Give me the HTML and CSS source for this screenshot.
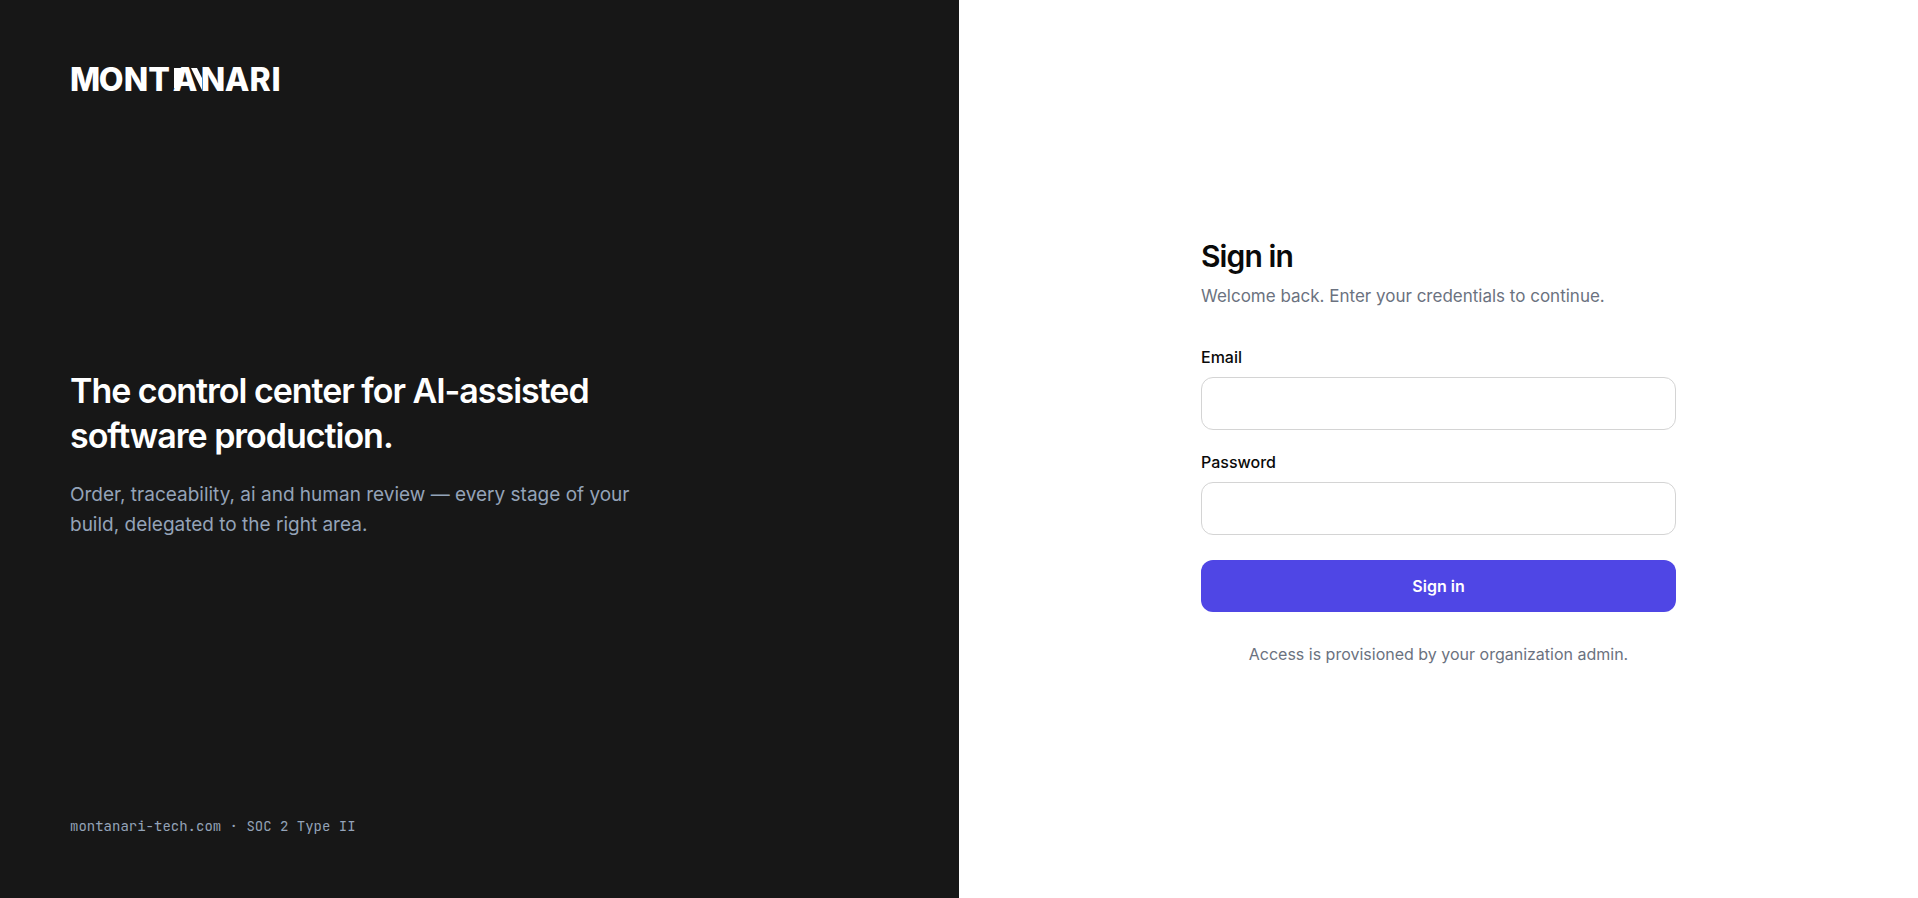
FILE: index.html
```html
<!DOCTYPE html>
<html lang="en">

<head>
    <meta charset="UTF-8">
    <meta name="viewport" content="width=device-width, initial-scale=1.0">
    <title>Sign in - Montanari</title>
    <link rel="stylesheet" href="styles.css">
</head>

<body>
    <div class="layout">
        <!-- Brand panel -->
        <aside class="brand">
            <svg class="logo" viewBox="0 0 208 24" role="img" aria-label="Montanari">
                <text class="logo-text" y="23" x="13 39 64 87 113 141 165 188 204">MONTANARI</text>
                <!-- accents on both sides of the middle A -->
                <path class="logo-accent" d="M102 0h12l-9 20h-3z" />
                <path class="logo-accent" d="M119 0h6l5 10v12z" />
            </svg>

            <div class="pitch">
                <h1>The control center for AI-assisted software production.</h1>
                <p>Order, traceability, ai and human review — every stage of your build, delegated to the right area.</p>
            </div>

            <p class="legal">montanari-tech.com · SOC 2 Type II</p>
        </aside>

        <!-- Sign in form -->
        <main class="panel">
            <form class="signin">
                <h2>Sign in</h2>
                <p class="intro">Welcome back. Enter your credentials to continue.</p>

                <label for="email">Email</label>
                <input type="email" id="email" autocomplete="email">

                <label for="password">Password</label>
                <input type="password" id="password" autocomplete="current-password">

                <button type="submit">Sign in</button>
                <p class="note">Access is provisioned by your organization admin.</p>
            </form>
        </main>
    </div>
</body>

</html>
```
FILE: styles.css
```css
* {
    box-sizing: border-box;
}

body {
    margin: 0;
    font-family: Inter, "Liberation Sans", sans-serif;
    background-color: #fff;
    color: #0a0a0a;
}

h1,
h2,
p {
    margin: 0;
}

.layout {
    display: grid;
    grid-template-columns: 1fr 1fr;
    min-height: 100vh;
}

.brand {
    display: flex;
    flex-direction: column;
    justify-content: space-between;
    padding: 60px 70px;
    background-color: #171717;
    color: #fff;
}

.logo {
    width: 208px;
    height: 24px;
    margin: 8px 2px 2px;
    overflow: visible;
}

.logo-text {
    font-family: Inter, sans-serif;
    font-size: 32px;
    font-weight: 800;
    text-anchor: middle;
    fill: #fff;
}

.logo-accent {
    fill: #fff;
}

.pitch {
    max-width: 580px;
}

.pitch h1 {
    font-size: 34px;
    font-weight: 600;
    line-height: 45px;
    letter-spacing: -0.03em;
}

.pitch p {
    margin-top: 22px;
    font-size: 19px;
    line-height: 30px;
    color: #94a3b8;
}

.legal {
    font-family: "JetBrains Mono", "Liberation Mono", monospace;
    font-size: 14px;
    line-height: 24px;
    color: #94a3b8;
}

.panel {
    display: flex;
    justify-content: center;
    align-items: center;
    padding: 44px 40px 40px;
}

.signin {
    display: flex;
    flex-direction: column;
    width: 100%;
    max-width: 475px;
}

.signin h2 {
    font-size: 30px;
    font-weight: 600;
    line-height: 40px;
    letter-spacing: -0.03em;
}

.intro {
    margin: 8px 0 37px;
    font-size: 17px;
    line-height: 24px;
    color: #6b7280;
}

.signin label {
    margin-bottom: 8px;
    font-size: 16px;
    font-weight: 500;
    line-height: 24px;
}

.signin input {
    height: 53px;
    margin-bottom: 20px;
    padding: 0 16px;
    border: 1px solid #d4d4d4;
    border-radius: 12px;
    font: inherit;
}

.signin button {
    height: 52px;
    margin-top: 5px;
    border: 0;
    border-radius: 12px;
    background-color: #4f46e5;
    color: #fff;
    font: inherit;
    font-weight: 600;
    cursor: pointer;
}

.signin button:hover {
    background-color: #4338ca;
}

.note {
    margin-top: 30px;
    font-size: 16px;
    line-height: 24px;
    text-align: center;
    color: #6b7280;
}
```
